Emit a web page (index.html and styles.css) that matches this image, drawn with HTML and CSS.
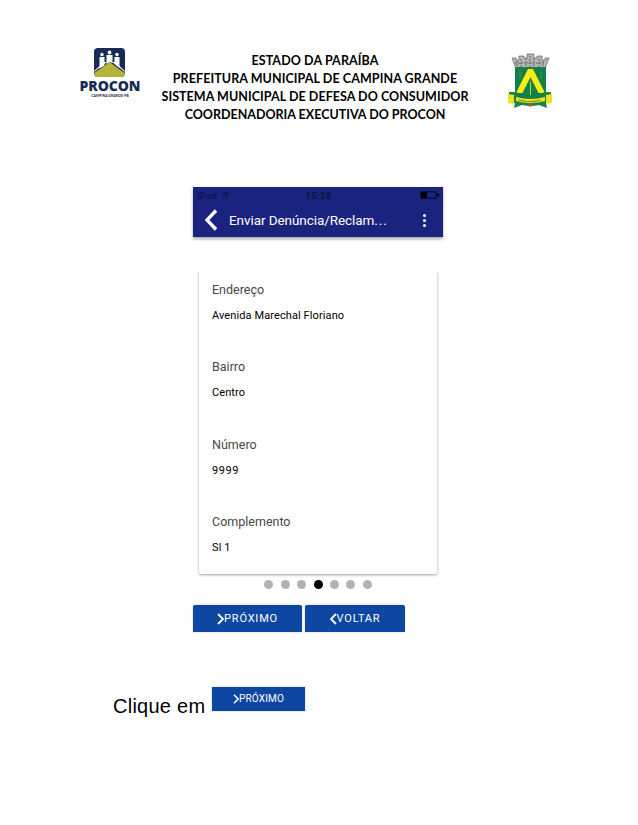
FILE: index.html
```html
<!DOCTYPE html>
<html lang="pt-BR">
<head>
<meta charset="utf-8">
<title>PROCON Campina Grande</title>
<link rel="stylesheet" href="styles.css">
</head>
<body>
<header class="letterhead">
  <div class="procon">
    <svg class="procon-logo" viewBox="0 0 60 30" role="img" aria-label="PROCON">
      <rect x="14" y="0" width="31" height="29" rx="4" fill="#172b55"/>
      <g fill="#fff">
        <circle cx="22" cy="6.500" r="1.700"/><circle cx="29.500" cy="4.500" r="1.900"/><circle cx="37" cy="6.500" r="1.700"/>
        <path d="M19.500 9h5v8.500l-5 3zM26.500 7h6v8l-3 -1-3 2zM34.500 9h5v11l-5-4z"/>
        <path d="M14 24 29.500 12 45 24v-1l-10-9h-11l-10 9z"/>
      </g>
      <path d="M29.500 14 Q37 20 45 25 Q45 29 41 29H18Q14 29 14 25Q22 20 29.500 14Z" fill="#b4b536"/>
    </svg>
    <span class="logo-name">PROCON</span>
    <span class="logo-city">CAMPINA GRANDE-PB</span>
  </div>
  <div class="heading">
    <div class="h1">ESTADO DA PARAÍBA</div>
    <div class="h2">PREFEITURA MUNICIPAL DE CAMPINA GRANDE</div>
    <div class="h3">SISTEMA MUNICIPAL DE DEFESA DO CONSUMIDOR</div>
    <div class="h4">COORDENADORIA EXECUTIVA DO PROCON</div>
  </div>
  <svg class="crest" viewBox="0 0 44 56" role="img" aria-label="Campina Grande">
    <path d="M4 5h4v2h3V3h5v2h3V1h7v4h3V3h5v4h3V5h4l-4 11H8Z" fill="#b5b5b5" stroke="#666" stroke-width=".7"/>
    <path d="M9 8v6M13 6v8M18 5v9M22 3v11M26 5v9M31 6v8M35 8v6M7 10h30" stroke="#666" stroke-width="1" stroke-dasharray="2 1"/>
    <path d="M7 14h31v26q0 9-15.500 11Q7 49 7 40Z" fill="#11804a"/>
    <path d="M22.500 16v15M12 18v8M33 18v8" stroke="#298f48" stroke-width="2"/>
    <path d="M20 16h5l12 24h-6.500l-8-16-8 16H8Z" fill="#f8ed16"/>
    <path d="M22.500 29v13" stroke="#d9ce25"/>
    <path d="M1 39h8l3 5q10 3 21 0l3-5h7v10l-5 1 1 5-8-3q-8 2-17 0l-8 3 1-5-6-1Z" fill="#198447"/>
    <path d="M0 41l6 1v9l-6-1ZM44 41l-6 1v9l6-1Z" fill="#eee31d"/>
    <path d="M8 44q14 4 29 0v4q-15 4-29 0Z" fill="#eee31d"/>
    <path d="M11 47q11 3 22 0" fill="none" stroke="#31512d" stroke-dasharray="1.500 .7"/>
    <circle cx="22.500" cy="52" r="1.800" fill="#bd522b"/>
  </svg>
</header>

<main class="app">
  <div class="bar">
    <div class="status">
      <span class="device">iPod
        <svg viewBox="0 0 10 8"><path d="M1 3q4-3 8 0M2.500 5q2.500-2 5 0M4 7h2" fill="none" stroke="#0c103c"/></svg>
      </span>
      <span class="clock">15:28</span>
      <svg class="battery" viewBox="0 0 20 8"><path d="M1 .8h15v6.400H1Z" fill="none" stroke="#05081f"/><path d="M1 1h6v6H1zM17 2.500h2v3h-2z"/></svg>
    </div>
    <div class="titlebar">
      <svg class="back" viewBox="0 0 14 22"><path d="M12 1.500 3 11l9 9.500" fill="none" stroke="#fff" stroke-width="3.300"/></svg>
      <span class="title">Enviar Denúncia/Reclam<span class="ellipsis">...</span></span>
      <span class="more"><i></i><i></i><i></i></span>
    </div>
  </div>
  <dl class="card">
    <div class="field"><dt>Endereço</dt><dd>Avenida Marechal Floriano</dd></div>
    <div class="field"><dt>Bairro</dt><dd>Centro</dd></div>
    <div class="field"><dt>Número</dt><dd class="digits">9999</dd></div>
    <div class="field"><dt>Complemento</dt><dd>Sl 1</dd></div>
  </dl>
  <div class="dots"><i></i><i></i><i></i><i class="on"></i><i></i><i></i><i></i></div>
  <div class="actions">
    <button class="btn next"><svg viewBox="0 0 7 12"><path d="m1 1 5 5-5 5"/></svg><span>PRÓXIMO</span></button>
    <button class="btn prev"><svg viewBox="0 0 7 12"><path d="M6 1 1 6l5 5"/></svg><span>VOLTAR</span></button>
  </div>
</main>

<p class="instruction"><span class="say">Clique em</span>
  <span class="btn mini"><svg viewBox="0 0 7 12"><path d="m1 1 5 5-5 5"/></svg><span>PRÓXIMO</span></span>
</p>
</body>
</html>
```
FILE: styles.css
```css
* { box-sizing: border-box; }
body { margin: 0; width: 638px; height: 825px; background: #fff; color: #000; font-family: Roboto, sans-serif; overflow: hidden; }
svg { display: block; flex: none; }

.letterhead { display: flex; align-items: flex-start; height: 187px; padding: 48px 0 0 80px; }
.procon { display: flex; flex-direction: column; align-items: center; width: 60px; color: #172b55; white-space: nowrap; }
.procon-logo { width: 60px; height: 30px; }
.logo-name { font: 800 14px/16px "Open Sans", sans-serif; letter-spacing: -.1px; }
.logo-city { font: 700 3.500px/4px Lato, sans-serif; }
.heading { width: 350px; padding-top: 4px; text-align: center; font: 700 12.500px/18px Lato, "Open Sans", sans-serif; white-space: nowrap; }
.h1 { letter-spacing: .1px; }
.h2 { letter-spacing: .08px; }
.h3 { letter-spacing: .05px; }
.crest { width: 44px; height: 56px; margin: 5px 0 0 18px; }

.app { width: 250px; margin-left: 193px; }
.bar { height: 50px; background: #1a237e; box-shadow: 0 2px 3px rgba(0, 0, 0, .35); }
.status { display: grid; grid-template-columns: 1fr 30px 1fr; align-items: center; height: 16px; padding: 0 3px 0 4px; color: #0c103c; font-size: 9.500px; }
.device { display: flex; align-items: center; gap: 4px; letter-spacing: .3px; }
.device svg { width: 10px; height: 8px; }
.clock { font-weight: 700; text-align: center; letter-spacing: .3px; }
.battery { width: 20px; height: 8px; justify-self: end; }
.titlebar { display: flex; align-items: center; height: 34px; padding: 0 17px 0 11px; }
.back { width: 14px; height: 22px; }
.title { margin-left: 11px; color: #fff; font-size: 13.500px; line-height: 20px; letter-spacing: -.07px; white-space: nowrap; }
.ellipsis { letter-spacing: .9px; }
.more { display: flex; flex-direction: column; gap: 2px; margin-left: auto; }
.more i { width: 3px; height: 3px; border-radius: 50%; background: #fff; }

.card { width: 238px; height: 303px; margin: 34px 0 0 6px; padding: 8.900px 13px 0; border-radius: 0 0 2px 2px; box-shadow: 0 1px 3px rgba(0, 0, 0, .38); clip-path: inset(0 -5px -5px -5px); }
.field { height: 77.400px; }
dt { color: #484848; font-size: 12.500px; line-height: 20px; }
dd { margin: 6px 0 0; font-size: 11px; line-height: 20px; letter-spacing: .1px; }
.digits { letter-spacing: .6px; }

.dots { display: flex; justify-content: center; gap: 7.400px; padding-top: 6px; }
.dots i { width: 9px; height: 9px; border-radius: 50%; background: #b2b2b2; }
.dots .on { background: #000; }

.actions { display: flex; gap: 3px; margin-top: 16px; }
.btn { display: flex; align-items: center; justify-content: center; height: 27px; padding: 1px 0 0; border: 0; border-radius: 2px 2px 0 0; background: #0d47a1; color: #fff; font: 11px/14px Roboto, sans-serif; letter-spacing: .8px; box-shadow: 0 0 2px rgba(0, 0, 0, .25); }
.btn svg { width: 7px; height: 12px; fill: none; stroke: #fff; stroke-width: 1.800; }
.next { width: 109px; }
.prev { width: 100px; }

.instruction { display: flex; margin: 55px 0 0 113px; }
.say { width: 99px; padding-top: 7px; font: 20px/24px "Liberation Sans", Arial, sans-serif; letter-spacing: .25px; white-space: nowrap; }
.mini { width: 93px; height: 24px; padding: 0; font-size: 10px; letter-spacing: .15px; border-radius: 0; }
.mini svg { width: 6px; height: 10px; }
```
